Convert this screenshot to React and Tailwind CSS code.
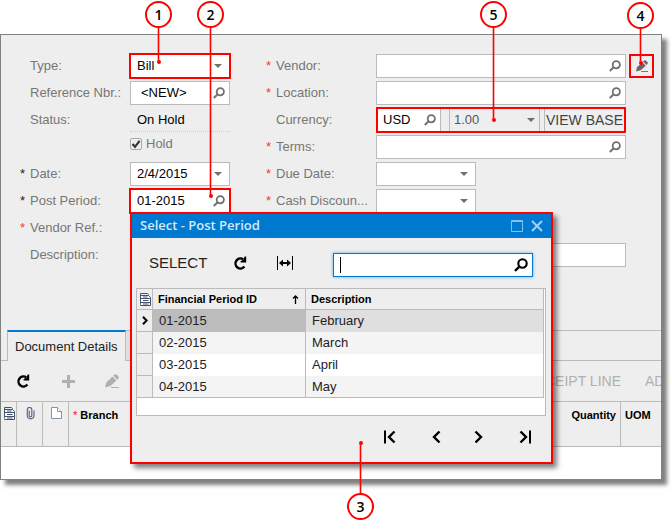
import { useState } from 'react';

const periods = [
  { id: '01-2015', description: 'February' },
  { id: '02-2015', description: 'March' },
  { id: '03-2015', description: 'April' },
  { id: '04-2015', description: 'May' },
];

/* ---------- icons ---------- */

function SearchIcon({ className = 'size-3' }) {
  return (
    <svg viewBox="0 0 12 12" className={className} fill="none" stroke="currentColor" strokeWidth="1.8">
      <circle cx="7.3" cy="4.7" r="3.6" />
      <path d="M4.4 7.6.8 11" strokeWidth="2" />
    </svg>
  );
}

function CaretIcon() {
  return (
    <svg viewBox="0 0 8 4" className="w-2 h-1" fill="currentColor">
      <path d="M0 0h8L4 4z" />
    </svg>
  );
}

function RefreshIcon() {
  return (
    <svg viewBox="0 0 14 14" className="size-3.5" fill="none" stroke="currentColor" strokeWidth="2.4">
      <path d="M10.4 3.4A5 5 0 1 0 11.4 10.600" />
      <path d="M13.200.6v5.900H7.600V5l3-1.200 1-3.200z" fill="currentColor" stroke="none" />
    </svg>
  );
}

function FitIcon() {
  return (
    <svg viewBox="0 0 16 14" className="w-4 h-3.5" fill="currentColor">
      <path d="M0 0h1v14H0zM15 0h1v14h-1zM4 6h8v2H4z" />
      <path d="M2 7l4-3.5v7zM14 7l-4-3.5v7z" />
    </svg>
  );
}

function PencilIcon({ className = 'size-3' }) {
  return (
    <svg viewBox="0 0 14 14" className={className} fill="currentColor">
      <path d="M7.400 2.600 11.400 6.600 5.400 12 0 13.500 1.300 8.500z" />
      <path d="M8.200 1.800 9.600.5Q10.500-.2 11.500.6L13.400 2.500Q14.200 3.500 13.500 4.400L12.200 5.800z" />
      <path d="M6 13h8v1H6z" />
    </svg>
  );
}

function PlusIcon() {
  return (
    <svg viewBox="0 0 13 13" className="size-[13px]" fill="currentColor">
      <path d="M5 0h3v5h5v3H8v5H5V8H0V5h5z" />
    </svg>
  );
}

function FormIcon() {
  return (
    <svg viewBox="0 0 11 13" className="w-[11px] h-[13px] text-[#44546e]" fill="none" stroke="currentColor">
      <path d="M.5 12.500V.5h7l1 1v1" />
      <path d="M2 2.500h6.500l2 2v8H.5" fill="#fff" />
      <path d="M.5 2.500h7M.5 5.500h10M.5 9.500h10M3 4h4.500M3 7.500h5.500M3 11h5.500" />
    </svg>
  );
}

function ClipIcon() {
  return (
    <svg viewBox="0 0 9 13" className="w-[9px] h-[13px] text-[#5a6a85]" fill="none" stroke="currentColor" strokeWidth="1.2">
      <path d="M3.200 3.500v5a1.300 1.300 0 0 0 2.600 0V2.600a2.100 2.100 0 0 0-4.500 0V9a3.400 3.400 0 0 0 6.700 0V3.500" />
    </svg>
  );
}

function PageIcon() {
  return (
    <svg viewBox="0 0 11 12" className="w-[11px] h-3 text-[#8693ad]" fill="#fff" stroke="currentColor">
      <path d="M.5.5h6l4 4v7H.5z" />
      <path d="M6.500.5v4h4" />
    </svg>
  );
}

function PagerIcon({ back, end }) {
  return (
    <svg viewBox="0 0 14 14" className="size-3.5" fill="none" stroke="currentColor" strokeWidth="2.400">
      <path d={back ? 'M11.500 1.500 6 7l5.500 5.500' : 'M2.500 1.500 8 7l-5.500 5.500'} />
      {end && <path d={back ? 'M2 .5v13' : 'M12 .5v13'} strokeWidth="2" />}
    </svg>
  );
}

/* ---------- form parts ---------- */

function Row({ id, label, star, children }) {
  return (
    <div className="flex h-6 items-center">
      <span className={`w-2.5 shrink-0 ${star === 'red' ? 'text-[#e8402c]' : 'text-[#222]'}`}>{star && '*'}</span>
      <label htmlFor={id} className="w-[100px] shrink-0 whitespace-nowrap text-[#767676]">
        {label}
      </label>
      {children}
    </div>
  );
}

function Lookup({ id, value = '', wide, marked, indent, children }) {
  return (
    <div
      className={`relative flex h-6 items-center border border-[#bbb] bg-white pr-1 text-[#707070] ${
        wide ? 'flex-1' : 'w-[100px]'
      } ${marked ? 'outline-2 -outline-offset-1 outline-[#f00]' : ''}`}
    >
      <input
        id={id}
        defaultValue={value}
        className={`min-w-0 flex-1 bg-transparent text-black outline-none ${indent ? 'pl-2.5' : 'pl-1.5'}`}
      />
      <button aria-label="Search">
        <SearchIcon />
      </button>
      {children}
    </div>
  );
}

function Dropdown({ id, value = '', marked, children }) {
  return (
    <div
      className={`relative flex h-6 w-[100px] items-center border border-[#bbb] bg-white pr-[7px] text-[#707070] ${
        marked ? 'outline-2 -outline-offset-1 outline-[#f00]' : ''
      }`}
    >
      <select id={id} defaultValue={value} className="min-w-0 flex-1 appearance-none bg-transparent pl-1.5 text-black">
        <option>{value}</option>
      </select>
      <CaretIcon />
      {children}
    </div>
  );
}

// Numbered bubble with a leader line that ends in a dot on the control
function Callout({ number, className, line, up }) {
  return (
    <div className={`pointer-events-none absolute z-30 flex w-[27px] items-center ${up ? 'flex-col-reverse' : 'flex-col'} ${className}`}>
      <span className="flex size-[27px] shrink-0 items-center justify-center rounded-full border-2 border-[#f00] bg-white font-['Open_Sans',sans-serif] text-sm font-semibold text-black">
        {number}
      </span>
      <span className={`w-px bg-[#f00] outline outline-[#f00]/30 ${line}`} />
      <span className="size-1 shrink-0 rounded-full bg-[#f00]" />
    </div>
  );
}

/* ---------- dialog ---------- */

function PeriodDialog() {
  const [selected, setSelected] = useState('01-2015');

  return (
    <div
      role="dialog"
      aria-label="Select - Post Period"
      className="absolute left-[129px] top-[177px] z-20 w-[423px] border-2 border-[#f00] bg-[#eee] shadow-[4px_4px_5px_rgba(0,0,0,0.5)]"
    >
      <div className="flex h-6 items-center bg-[#0079d0] pl-2 pr-2 text-[#d3e9f9]">
        <h2 className="flex-1 pb-0.5 font-['Open_Sans',sans-serif] text-[13px] font-semibold">Select - Post Period</h2>
        <button aria-label="Maximize" className="mr-2 text-[#84c1ed]">
          <svg viewBox="0 0 12 12" className="size-3" fill="none" stroke="currentColor">
            <path d="M.5.5h11v11H.5zM0 1.500h12" />
          </svg>
        </button>
        <button aria-label="Close" className="text-[#a3d2f3]">
          <svg viewBox="0 0 12 12" className="size-3" fill="none" stroke="currentColor" strokeWidth="2">
            <path d="M1 1l10 10M11 1 1 11" />
          </svg>
        </button>
      </div>

      <div className="flex h-[50px] items-center pl-[17px] pr-[18px] text-black">
        <button className="text-[15px] text-[#222]">SELECT</button>
        <button aria-label="Refresh" className="ml-[26px]">
          <RefreshIcon />
        </button>
        <button aria-label="Fit to width" className="ml-[30px]">
          <FitIcon />
        </button>
        <div className="ml-auto mt-1 flex h-6 w-[200px] items-center border border-[#0079d0] bg-white pl-1.5 pr-1 shadow-[0_0_3px_#58aee8]">
          <span className="h-4 w-px bg-black" />
          <input aria-label="Search periods" className="min-w-0 flex-1 bg-transparent outline-none" />
          <button aria-label="Search">
            <SearchIcon className="size-3.5" />
          </button>
        </div>
      </div>

      <div className="ml-1 mr-[5px] h-32 border border-[#bbb] bg-white pr-px">
        <table className="w-full table-fixed border-separate border-spacing-0 border-r border-[#bbb] text-left">
          <colgroup>
            <col className="w-4" />
            <col className="w-[153px]" />
            <col />
          </colgroup>
          <thead className="bg-[#eee] text-[11px] text-black">
            <tr className="h-[21px]">
              <th className="border-b border-r border-[#bbb] pl-[3px]">
                <FormIcon />
              </th>
              <th className="border-b border-r border-[#bbb] pl-[5px]">
                <div className="flex items-center justify-between pr-1.5">
                  Financial Period ID
                  <svg viewBox="0 0 7 9" className="h-[9px] w-[7px]" fill="none" stroke="currentColor" strokeWidth="1.300">
                    <path d="M3.500 9V1M1 3.500 3.500 1 6 3.500" />
                  </svg>
                </div>
              </th>
              <th className="border-b border-[#bbb] pl-[5px]">Description</th>
            </tr>
          </thead>
          <tbody className="text-[#222]">
            {periods.map((p, i) => {
              const active = p.id === selected;
              const stripe = i % 2 ? 'bg-[#f4f4f4]' : 'bg-white';
              const last = i === periods.length - 1 ? 'border-b' : '';
              return (
                <tr key={p.id} className="h-[22px]" onClick={() => setSelected(p.id)}>
                  <td className="border-b border-r border-[#bbb] bg-[#eee] pl-[5px] text-black">
                    {active && (
                      <svg viewBox="0 0 6 9" className="h-[9px] w-1.5" fill="none" stroke="currentColor" strokeWidth="2">
                        <path d="M1 .8 4.600 4.500 1 8.200" />
                      </svg>
                    )}
                  </td>
                  <td className={`border-r border-[#bbb] pl-1.5 ${last} ${active ? 'bg-[#bcbcbc]' : stripe}`}>{p.id}</td>
                  <td className={`border-[#bbb] pl-1.5 ${last} ${active ? 'bg-[#dfdfdf]' : stripe}`}>{p.description}</td>
                </tr>
              );
            })}
          </tbody>
        </table>
      </div>

      <div className="relative flex h-[46px] items-center justify-end gap-[21px] pb-1 pr-3.5 text-black">
        <button aria-label="First page" className="flex w-6 justify-center">
          <PagerIcon back end />
        </button>
        <button aria-label="Previous page" className="flex w-6 justify-center">
          <PagerIcon back />
        </button>
        <button aria-label="Next page" className="flex w-6 justify-center">
          <PagerIcon />
        </button>
        <button aria-label="Last page" className="flex w-6 justify-center">
          <PagerIcon end />
        </button>
        <Callout number="3" up className="left-[215px] top-[25px]" line="h-[48px]" />
      </div>
    </div>
  );
}

/* ---------- bill form ---------- */

function BillForm() {
  return (
    <form className="pl-[19px] pr-[35px] pt-[19px]" onSubmit={(e) => e.preventDefault()}>
      <div className="flex gap-9">
        <div className="flex w-[210px] shrink-0 flex-col gap-[3px]">
          <Row id="type" label="Type:">
            <Dropdown id="type" value="Bill" marked>
              <Callout number="1" className="-top-[54px] left-[14px]" line="h-[32px]" />
            </Dropdown>
          </Row>
          <Row id="ref" label="Reference Nbr.:">
            <Lookup id="ref" value="<NEW>" indent />
          </Row>
          <Row id="status" label="Status:">
            <output id="status" className="flex h-6 w-[100px] items-center border-b border-dotted border-[#ccc] pl-[7px] text-black">
              On Hold
            </output>
          </Row>
          <div className="flex h-6 items-center pb-1.5 pl-[110px]">
            <label className="relative flex items-center gap-1 text-[#767676]">
              <input type="checkbox" defaultChecked className="peer size-3 appearance-none rounded-xs border border-[#aaa] bg-[#eee]" />
              <svg viewBox="0 0 12 12" className="absolute left-0 size-3 text-[#333] opacity-0 peer-checked:opacity-100" fill="none" stroke="currentColor" strokeWidth="2.200">
                <path d="M2.500 6 5 8.800 9.600 2.800" />
              </svg>
              Hold
            </label>
          </div>
          <Row id="date" label="Date:" star="black">
            <Dropdown id="date" value="2/4/2015" />
          </Row>
          <Row id="period" label="Post Period:" star="black">
            <Lookup id="period" value="01-2015" marked>
              <Callout number="2" className="-top-[189px] left-[66px]" line="h-[166px]" />
            </Lookup>
          </Row>
          <Row id="vendorRef" label="Vendor Ref.:" star="red">
            <input id="vendorRef" className="h-6 w-[100px] border border-[#bbb] bg-white" />
          </Row>
        </div>

        <div className="flex flex-1 flex-col gap-[3px]">
          <Row id="vendor" label="Vendor:" star="red">
            <Lookup id="vendor" wide />
            <button
              aria-label="Edit vendor"
              className="relative -mr-7 ml-[3px] flex h-6 w-[25px] items-center justify-center border-2 border-[#f00] text-[#666]"
            >
              <PencilIcon />
              <Callout number="4" className="-top-[54px] -left-[4px]" line="h-[32px]" />
            </button>
          </Row>
          <Row id="location" label="Location:" star="red">
            <Lookup id="location" wide />
          </Row>
          <Row id="currency" label="Currency:">
            <div className="relative -my-px flex h-[26px] flex-1 items-stretch border-2 border-[#f00] text-[#707070]">
              <div className="flex w-[63px] items-center border-r border-[#bbb] bg-white pr-1">
                <input id="currency" defaultValue="USD" className="min-w-0 flex-1 bg-transparent pl-[5px] text-black outline-none" />
                <button aria-label="Search currency">
                  <SearchIcon />
                </button>
              </div>
              <div className="ml-2 flex flex-1 items-center border-x border-[#bbb] pr-1">
                <select aria-label="Rate" className="min-w-0 flex-1 appearance-none bg-transparent pl-1 text-[#555]">
                  <option>1.00</option>
                </select>
                <CaretIcon />
              </div>
              <button className="ml-1 w-20 border-l border-[#bbb] text-center text-sm whitespace-nowrap text-[#444]">VIEW BASE</button>
              <Callout number="5" className="-top-[108px] left-[102px]" line="h-[90px]" />
            </div>
          </Row>
          <Row id="terms" label="Terms:" star="red">
            <Lookup id="terms" wide />
          </Row>
          <Row id="due" label="Due Date:" star="red">
            <Dropdown id="due" />
          </Row>
          <Row id="discount" label="Cash Discoun..." star="red">
            <Dropdown id="discount" />
          </Row>
        </div>
      </div>
      <div className="mt-[3px]">
        <Row id="description" label="Description:">
          <input id="description" className="h-6 flex-1 border border-[#bbb] bg-white" />
        </Row>
      </div>
    </form>
  );
}

function DetailsTab() {
  return (
    <section className="mt-[63px]">
      <div role="tablist" className="flex h-[31px]">
        <span className="w-1.5 border-b border-[#bbb]" />
        <button role="tab" aria-selected="true" className="border-x border-t-2 border-x-[#bbb] border-t-[#0079d0] px-[7px] text-[#222]">
          Document Details
        </button>
        <span className="flex-1 border-b border-t border-[#bbb] bg-[#eee]">
          <span className="block h-full w-10 bg-[#e0e0e0]" />
        </span>
      </div>

      <div className="flex h-10 items-center overflow-hidden pl-[15px] text-[#b0b0b0]">
        <button aria-label="Refresh" className="text-black">
          <RefreshIcon />
        </button>
        <button aria-label="Add row" className="ml-8">
          <PlusIcon />
        </button>
        <button aria-label="Edit row" className="ml-[30px]">
          <PencilIcon className="size-3.5" />
        </button>
        <button className="ml-auto text-sm">ADD RECEIPT LINE</button>
        <button className="ml-6 w-4 text-sm whitespace-nowrap">AD</button>
      </div>

      <table className="w-full table-fixed border-separate border-spacing-0 border-b border-[#bbb] text-left text-[11px] text-black">
        <thead>
          <tr className="h-[45px] align-top *:border-t *:border-[#bbb] *:pt-[5px]">
            <th className="w-4 border-r pl-[3px]">
              <FormIcon />
            </th>
            <th className="w-[26px] border-r pl-[9px]">
              <ClipIcon />
            </th>
            <th className="w-[26px] border-r pl-2">
              <PageIcon />
            </th>
            <th className="pl-1">
              <span className="font-normal text-[#f00]">*</span> Branch
            </th>
            <th className="w-[120px] border-r pr-1 text-right">Quantity</th>
            <th className="w-10 pl-1">UOM</th>
          </tr>
        </thead>
      </table>
      <div className="h-8 bg-white" />
    </section>
  );
}

export default function App() {
  return (
    <div className="min-h-screen overflow-hidden bg-white pb-10 pr-[9px] pt-[34px] font-['Liberation_Sans',Arial,sans-serif] text-[13px] leading-4">
      <main className="relative border border-[#7f837f] bg-[#eee] shadow-[5px_5px_4px_rgba(0,0,0,0.5)]">
        <BillForm />
        <DetailsTab />
        <PeriodDialog />
      </main>
    </div>
  );
}
